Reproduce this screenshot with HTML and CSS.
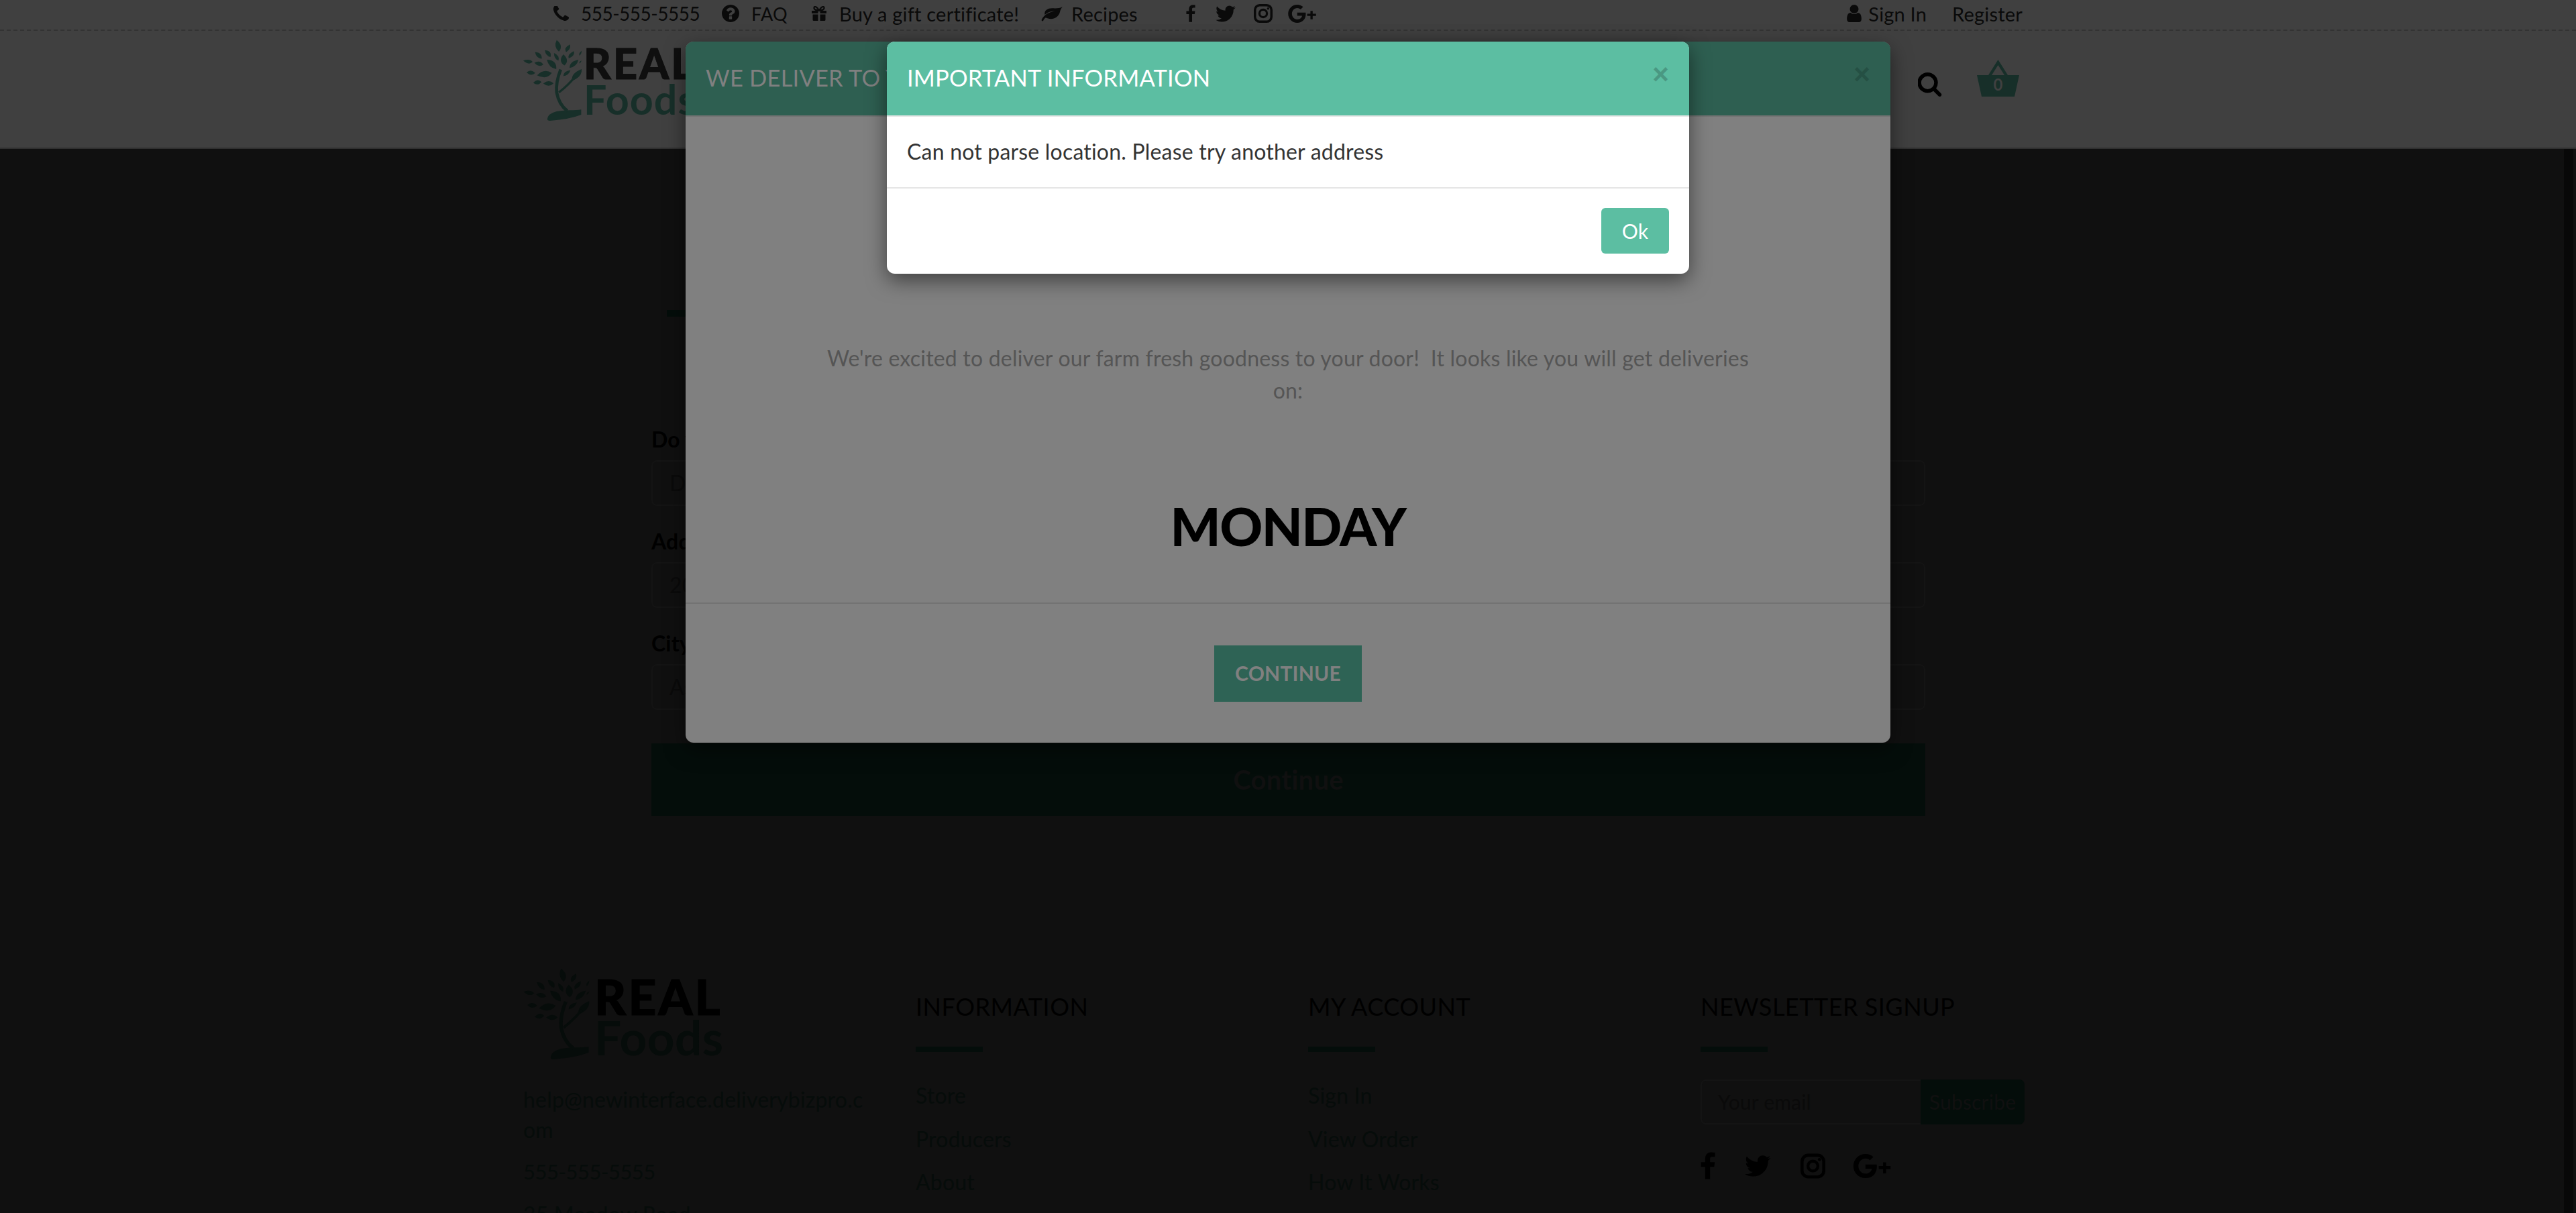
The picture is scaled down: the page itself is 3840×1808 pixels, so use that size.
FILE: index.html
```html
<!DOCTYPE html>
<html lang="en">

<head>
    <title>Real Foods</title>

    <link rel="stylesheet" href="styles.css">
</head>

<body>
    <svg class="sprite" width="0" height="0">
        <defs>
            <symbol id="i-phone" viewBox="200 200 1400 1400"><path d="M1600 1240q0 27-10 70.5t-21 68.5q-21 50-122 106-94 51-186 51-27 0-53-3.5t-57.5-12.5-47-14.5-55.5-20.5-49-18q-98-35-175-83-127-79-264-216t-216-264q-48-77-83-175-3-9-18-49t-20.5-55.5-14.5-47-12.5-57.5-3.5-53q0-92 51-186 56-101 106-122 25-11 68.5-21t70.5-10q14 0 21 3 18 6 53 76 11 19 30 54t35 63.5 31 53.5q3 4 17.5 25t21.5 35.5 7 28.5q0 20-28.5 50t-62 55-62 53-28.5 46q0 9 5 22.5t8.5 20.5 14 24 11.5 19q76 137 174 235t235 174q2 1 19 11.5t24 14 20.5 8.5 22.5 5q18 0 46-28.5t53-62 55-62 50-28.5q14 0 28.5 7t35.5 21.5 25 17.5q25 15 53.5 31t63.5 35 54 30q70 35 76 53 3 7 3 21z"/></symbol>
            <symbol id="i-question" viewBox="128 128 1536 1536"><path d="M1024 1376v-192q0-14-9-23t-23-9h-192q-14 0-23 9t-9 23v192q0 14 9 23t23 9h192q14 0 23-9t9-23zm256-672q0-88-55.5-163t-138.5-116-170-41q-243 0-371 213-15 24 8 42l132 100q7 6 19 6 16 0 25-12 53-68 86-92 34-24 86-24 48 0 85.5 26t37.5 59q0 38-20 61t-68 45q-63 28-115.5 86.5t-52.5 125.5v36q0 14 9 23t23 9h192q14 0 23-9t9-23q0-19 21.5-49.5t54.5-49.5q32-18 49-28.5t46-35 44.5-48 28-60.5 12.5-81zm384 192q0 209-103 385.5t-279.5 279.5-385.5 103-385.5-103-279.5-279.5-103-385.5 103-385.5 279.5-279.5 385.5-103 385.5 103 279.5 279.5 103 385.5z"/></symbol>
            <symbol id="i-gift" viewBox="0 0 24 24"><path d="M1 8h9.500v4H1zM13.500 8H23v4h-9.500zM2.500 13.500h8v9.500h-6.500q-1.500 0-1.500-1.500zM13.500 13.500h8v8q0 1.500-1.500 1.500h-6.500z"/><path d="M12 7.500C9 2 5 .5 4.500 3.500 4 6.500 8 7.500 12 7.500c4 0 8-1 7.500-4C19 .5 15 2 12 7.500z" fill="none" stroke="currentColor" stroke-width="2.200"/></symbol>
            <symbol id="i-leaf" viewBox="0 0 34 24"><path d="M33 1c-2 3-3 4-4 8-1.500 7-8 11-14 11-3 0-6-1-8-2-2 1-3 3-4 5-1 1-3 0-2.500-1.500C2 18 5 14 10 11.500c4-2 8-3 11-4-5 .5-11 2-15.500 6C4 7 10 3.500 17 3.500c6 0 12 .5 16-2.500z"/></symbol>
            <symbol id="i-facebook" viewBox="448 0 920 1664" preserveAspectRatio="xMinYMid meet"><path d="M1343 12v264h-157q-86 0-116 36t-30 108v189h293l-39 296h-254v759h-306v-759h-255v-296h255v-218q0-186 104-288.5t277-102.5q147 0 228 12z"/></symbol>
            <symbol id="i-twitter" viewBox="100 250 1600 1300"><path d="M1684 408q-67 98-162 167 1 14 1 42 0 130-38 259.5t-115.5 248.5-184.5 210.5-258 146-323 54.5q-271 0-496-145 35 4 76 4 225 0 401-138-105-2-188-64.5t-114-159.5q33 5 61 5 43 0 85-11-112-23-185.5-111.5t-73.5-205.5v-4q68 38 146 41-66-44-105-115t-39-154q0-88 44-163 121 149 294.500 238.500t371.500 99.500q-8-38-8-74 0-134 94.500-228.500t228.500-94.500q140 0 236 102 109-21 205-78-37 115-142 178 92-10 184-50z"/></symbol>
            <symbol id="i-instagram" viewBox="0 0 24 24"><rect x="1.500" y="1.500" width="21" height="21" rx="6" fill="none" stroke="currentColor" stroke-width="3"/><circle cx="12" cy="12" r="4.800" fill="none" stroke="currentColor" stroke-width="2.800"/><circle cx="18.300" cy="5.700" r="1.500"/></symbol>
            <symbol id="i-gplus" viewBox="0 0 40 26"><path d="M13 0c3.500 0 6.300 1.200 8.500 3.200l-3.600 3.500C17 5.800 15.400 4.800 13 4.800 8.800 4.800 5.400 8.400 5.400 13s3.400 8.200 7.600 8.200c4.800 0 6.700-3.400 7-5.300h-7v-4.600h12.100c.1.700.2 1.400.2 2.300C25.300 21 20.400 26 13 26 5.800 26 0 20.200 0 13S5.800 0 13 0z"/><path d="M32 9h3.200v4H40v3.200h-4.800V21H32v-4.800h-4.700V13H32z"/></symbol>
            <symbol id="i-user" viewBox="256 128 1280 1536"><path d="M1536 1399q0 109-62.5 187t-150.5 78h-854q-88 0-150.5-78t-62.5-187q0-85 8.5-160.5t31.5-152 58.5-131 94-89 134.5-34.5q131 128 313 128t313-128q76 0 134.5 34.5t94 89 58.5 131 31.5 152 8.5 160.5zm-256-887q0 159-112.5 271.5t-271.5 112.5-271.5-112.5-112.5-271.5 112.5-271.5 271.5-112.5 271.5 112.5 112.5 271.5z"/></symbol>
            <symbol id="i-search" viewBox="128 128 1600 1664"><path d="M1216 832q0-185-131.500-316.500t-316.500-131.500-316.500 131.500-131.500 316.500 131.500 316.500 316.500 131.500 316.500-131.500 131.500-316.500zm512 832q0 52-38 90t-90 38q-54 0-90-38l-343-342q-179 124-399 124-143 0-273.500-55.500t-225-150-150-225-55.500-273.500 55.500-273.500 150-225 225-150 273.500-55.500 273.500 55.500 225 150 150 225 55.500 273.500q0 220-124 399l343 343q37 37 37 90z"/></symbol>
            <symbol id="i-tree" viewBox="30 25 265 370">
                <path d="M180 30Q212 55 190 82Q165 60 180 30M240 50Q245 72 222 84Q210 65 240 50M83 84Q115 85 113 114Q88 110 83 84M127 75Q160 78 152 106Q130 100 127 75M168 88Q195 100 188 122Q168 115 168 88M258 80Q262 102 234 112Q228 92 258 80M210 94Q240 120 215 144Q185 125 210 94M292 78Q292 92 282 100Q278 88 292 78M136 118Q182 120 178 160Q145 155 136 118M278 118Q270 150 238 155Q238 125 278 118M292 122Q290 130 282 135Q280 126 292 122M30 122Q60 112 72 128Q55 145 30 122M80 132Q105 118 120 140Q100 155 80 132M45 175Q65 158 84 178Q65 195 45 175M92 188Q125 155 158 178Q135 210 92 188M75 222Q95 200 112 218Q95 238 75 222M120 225Q145 205 166 224Q145 245 120 225M242 165Q235 188 210 192Q210 170 242 165M292 160Q295 195 250 212Q242 180 292 160"/>
                <path d="M138 385Q140 360 180 350Q215 345 240 345Q270 345 290 342L290 365Q240 385 150 392Q138 392 138 385"/>
                <path d="M228 348Q190 320 180 265Q175 220 198 162" fill="none" stroke="currentColor" stroke-width="14"/>
                <path d="M190 265Q235 230 262 195" fill="none" stroke="currentColor" stroke-width="10"/>
            </symbol>
        </defs>
    </svg>

    <div class="top-bar">
        <div class="container top-bar__inner">
            <a class="top-link top-link--phone"><svg class="ico ico--phone"><use href="#i-phone"/></svg><span class="phone-number">555-555-5555</span></a>
            <a class="top-link top-link--faq"><svg class="ico ico--faq"><use href="#i-question"/></svg>FAQ</a>
            <a class="top-link top-link--gift"><svg class="ico ico--gift"><use href="#i-gift"/></svg>Buy a gift certificate!</a>
            <a class="top-link top-link--leaf"><svg class="ico ico--leaf"><use href="#i-leaf"/></svg>Recipes</a>
            <div class="top-social">
                <svg class="top-social__f"><use href="#i-facebook"/></svg>
                <svg class="top-social__t"><use href="#i-twitter"/></svg>
                <svg class="top-social__i"><use href="#i-instagram"/></svg>
                <svg class="top-social__g"><use href="#i-gplus"/></svg>
            </div>
            <div class="top-account">
                <a class="top-link top-link--user"><svg class="ico ico--user"><use href="#i-user"/></svg>Sign In</a>
                <a class="top-link">Register</a>
            </div>
        </div>
    </div>

    <header class="site-header">
        <div class="container site-header__inner">
            <div class="logo">
                <svg class="logo__tree"><use href="#i-tree"/></svg>
                <div class="logo__text">
                    <span class="logo__real">REAL</span>
                    <span class="logo__foods">Foods</span>
                </div>
            </div>
            <svg class="search-icon"><use href="#i-search"/></svg>
            <div class="basket">
                <svg class="basket__icon" viewBox="0 0 63 55"><path d="M31.500 0 46 23h17l-7 32H7L0 23h17zM22 23h19l-9.500-15z" fill-rule="evenodd"/></svg>
                <span class="basket__count">0</span>
            </div>
        </div>
    </header>

    <main class="page-main">
        <div class="step-bar"></div>
        <div class="field">
            <label class="field__label">Do you want delivery?</label>
            <div class="field__input">Delivery</div>
        </div>
        <div class="field">
            <label class="field__label">Address</label>
            <div class="field__input">20 Main Street</div>
        </div>
        <div class="field">
            <label class="field__label">City</label>
            <div class="field__input">Asheville</div>
        </div>
        <div class="main-button">Continue</div>
    </main>

    <footer class="site-footer">
        <div class="footer-col">
            <div class="logo logo--footer">
                <svg class="logo__tree"><use href="#i-tree"/></svg>
                <div class="logo__text">
                    <span class="logo__real">REAL</span>
                    <span class="logo__foods">Foods</span>
                </div>
            </div>
            <p class="footer-contact footer-contact--email">help@newinterface.deliverybizpro.com</p>
            <p class="footer-contact footer-contact--phone">555-555-5555</p>
            <p class="footer-contact">35 Meadow Road</p>
        </div>
        <div class="footer-col footer-col--links">
            <h4 class="footer-title">INFORMATION</h4>
            <a class="footer-link">Store</a>
            <a class="footer-link">Producers</a>
            <a class="footer-link">About</a>
        </div>
        <div class="footer-col footer-col--links">
            <h4 class="footer-title">MY ACCOUNT</h4>
            <a class="footer-link">Sign In</a>
            <a class="footer-link">View Order</a>
            <a class="footer-link">How It Works</a>
        </div>
        <div class="footer-col footer-col--links">
            <h4 class="footer-title">NEWSLETTER SIGNUP</h4>
            <div class="subscribe">
                <div class="subscribe__input">Your email</div>
                <div class="subscribe__button">Subscribe</div>
            </div>
            <div class="footer-social">
                <svg class="footer-social__f"><use href="#i-facebook"/></svg>
                <svg class="footer-social__t"><use href="#i-twitter"/></svg>
                <svg class="footer-social__i"><use href="#i-instagram"/></svg>
                <svg class="footer-social__g"><use href="#i-gplus"/></svg>
            </div>
        </div>
    </footer>

    <div class="scroll-track"></div>

    <!-- Окно под верхним окном -->
    <div class="modal modal--back">
        <div class="modal__header modal__header--back">
            <span class="modal__title">WE DELIVER TO YOU</span>
            <span class="modal__close">&times;</span>
        </div>
        <div class="deliver-body">
            <p class="deliver-text">We're excited to deliver our farm fresh goodness to your door!&nbsp; It looks like you will get deliveries<br>on:</p>
            <p class="deliver-day">MONDAY</p>
        </div>
        <div class="deliver-footer">
            <div class="deliver-button">CONTINUE</div>
        </div>
    </div>

    <div class="modal modal--front">
        <div class="modal__header">
            <span class="modal__title">IMPORTANT INFORMATION</span>
            <span class="modal__close">&times;</span>
        </div>
        <div class="alert-body">Can not parse location. Please try another address</div>
        <div class="alert-footer">
            <div class="alert-button">Ok</div>
        </div>
    </div>
</body>

</html>
```

FILE: styles.css
```css
* {
    padding: 0;
    margin: 0;
    box-sizing: border-box;
}

body {
    position: relative;
    height: 100vh;
    overflow: hidden;
    background: #101010;
    color: #000;
    font-family: Lato, "Open Sans", sans-serif;
    font-size: 32px;
    letter-spacing: 0.2px;
}

.sprite {
    position: absolute;
}

.container {
    width: 2240px;
    margin-left: 780px;
}

/* Верхняя полоса */
.top-bar {
    height: 46px;
    background: #404040;
    border-bottom: 2px dashed #333;
}

.top-bar__inner {
    display: flex;
    align-items: center;
    height: 40px;
    padding: 0 5px 0 45px;
}

.top-link {
    display: flex;
    align-items: center;
    font-size: 29px;
    color: #0a0a0a;
    white-space: nowrap;
}

.phone-number {
    font-size: 28px;
    letter-spacing: -0.5px;
}

.ico {
    fill: currentColor;
}

.ico--phone {
    width: 23px;
    height: 23px;
    margin-right: 18px;
}

.ico--faq {
    width: 26px;
    height: 26px;
    margin-right: 18px;
}

.ico--gift {
    width: 24px;
    height: 24px;
    margin-right: 18px;
}

.ico--leaf {
    width: 33px;
    height: 23px;
    margin-right: 12px;
}

.ico--user {
    width: 22px;
    height: 26px;
    margin-right: 10px;
}

.top-link--phone {
    width: 251px;
}

.top-link--faq {
    width: 133px;
    font-size: 27px;
}

.top-link--gift {
    width: 343px;
}

.top-link--leaf {
    width: 216px;
}

.top-social {
    display: flex;
    align-items: center;
    fill: #0a0a0a;
    color: #0a0a0a;
}

.top-social__f {
    width: 14px;
    height: 26px;
    margin-right: 30px;
}

.top-social__t {
    width: 30px;
    height: 25px;
    margin-right: 26px;
}

.top-social__i {
    width: 30px;
    height: 28px;
    margin-right: 22px;
}

.top-social__g {
    width: 42px;
    height: 27px;
}

.top-account {
    display: flex;
    gap: 38px;
    margin-left: auto;
}

/* Шапка */
.site-header {
    height: 176px;
    background: #404040;
    border-bottom: 2px solid #303030;
}

.site-header__inner {
    display: flex;
    align-items: flex-start;
    height: 100%;
}

.logo {
    display: flex;
    width: 400px;
    margin-top: 12px;
    fill: #172f29;
    color: #172f29;
}

.logo__tree {
    width: 88px;
    height: 123px;
    flex: none;
}

.logo__text {
    display: flex;
    flex-direction: column;
    margin-left: 2px;
}

.logo__real {
    margin-top: 8px;
    font-size: 63px;
    line-height: 56px;
    font-weight: 900;
    color: #0f0f0f;
    letter-spacing: 3px;
    -webkit-text-stroke: 1px #0f0f0f;
}

.logo__foods {
    font-size: 61px;
    line-height: 52px;
    font-weight: 700;
    color: #172f29;
    letter-spacing: 1px;
}

.search-icon {
    width: 36px;
    height: 36px;
    margin: 62px 0 0 auto;
    fill: #000;
}

.basket {
    position: relative;
    width: 63px;
    height: 55px;
    margin: 43px 10px 0 52px;
    fill: #172f29;
}

.basket__icon {
    display: block;
    width: 63px;
    height: 55px;
}

.basket__count {
    position: absolute;
    left: 0;
    right: 0;
    top: 20px;
    text-align: center;
    font-size: 24px;
    line-height: 34px;
    font-weight: 700;
    color: #404040;
}

/* Форма за окнами */
.page-main {
    width: 1899px;
    margin-left: 971px;
    padding-top: 240px;
}

.step-bar {
    width: 60px;
    height: 10px;
    margin-left: 23px;
    background: #040d0a;
}

.step-bar + .field {
    margin-top: 163px;
}

.field {
    margin-bottom: 33px;
}

.field__label {
    display: block;
    font-size: 32px;
    line-height: 40px;
    font-weight: 700;
    color: #000;
    margin-bottom: 11px;
}

.field__input {
    height: 68px;
    padding-left: 25px;
    border: 2px solid #141414;
    border-radius: 8px;
    line-height: 64px;
    color: #0a0a0a;
}

.main-button {
    height: 108px;
    margin-top: 50px;
    background: #040d0a;
    text-align: center;
    font-size: 40px;
    line-height: 108px;
    font-weight: 700;
    color: #101010;
}

/* Подвал */
.site-footer {
    display: grid;
    grid-template-columns: repeat(4, 515px);
    gap: 70px;
    margin: 226px 0 0 780px;
}

.logo--footer {
    width: 300px;
    margin: 0;
    fill: #060c0a;
    color: #060c0a;
}

.logo--footer .logo__tree {
    width: 100px;
    height: 138px;
}

.logo--footer .logo__text {
    margin-left: 6px;
}

.logo--footer .logo__real {
    margin-top: 10px;
    font-size: 73px;
    line-height: 66px;
    color: #000;
    -webkit-text-stroke: 1px #000;
}

.logo--footer .logo__foods {
    font-size: 71px;
    line-height: 56px;
    color: #060c0a;
    letter-spacing: 0.5px;
}

.footer-contact {
    line-height: 45px;
    color: #060c0a;
    word-break: break-all;
    margin-bottom: 18px;
}

.footer-contact--email {
    margin-top: 36px;
}

.footer-contact--phone {
    font-size: 31px;
    letter-spacing: -0.5px;
}

.footer-col--links {
    padding-top: 38px;
}

.footer-title {
    position: relative;
    font-size: 36px;
    line-height: 40px;
    font-weight: 400;
    color: #000;
    letter-spacing: 0.5px;
    margin-bottom: 93px;
}

.footer-title::after {
    content: '';
    position: absolute;
    left: 0;
    bottom: -48px;
    width: 100px;
    height: 8px;
    background: #040d0a;
}

.footer-link {
    display: block;
    line-height: 40px;
    color: #060c0a;
    margin-bottom: 24.5px;
}

.subscribe {
    display: flex;
    width: 483px;
    height: 67px;
    margin-top: -4px;
    font-size: 30px;
    line-height: 67px;
}

.subscribe__input {
    flex: 1;
    padding-left: 24px;
    border: 2px solid #141414;
    border-right: 0;
    border-radius: 8px 0 0 8px;
    color: #0a0a0a;
    line-height: 63px;
}

.subscribe__button {
    width: 155px;
    background: #040d0a;
    border-radius: 0 8px 8px 0;
    text-align: center;
    color: #101010;
}

.footer-social {
    display: flex;
    align-items: center;
    margin-top: 41px;
    fill: #000;
    color: #000;
}

.footer-social__f {
    width: 22px;
    height: 41px;
    margin-right: 44px;
}

.footer-social__t {
    width: 39px;
    height: 32px;
    margin-right: 44px;
}

.footer-social__i {
    width: 37px;
    height: 38px;
    margin-right: 41px;
}

.footer-social__g {
    width: 57px;
    height: 36px;
}

.scroll-track {
    position: absolute;
    top: 222px;
    bottom: 0;
    left: 3822px;
    width: 14px;
    background: #080808;
}

/* Окна */
.modal {
    position: absolute;
    top: 62px;
    overflow: hidden;
    border-radius: 12px;
}

.modal--back {
    left: 1022px;
    width: 1796px;
    height: 1045px;
    background: #808080;
    box-shadow: 0 10px 30px rgba(0, 0, 0, 0.5);
}

.modal--front {
    left: 1322px;
    width: 1196px;
    height: 346px;
    background: #fff;
    box-shadow: 0 10px 30px rgba(0, 0, 0, 0.5);
}

.modal__header {
    display: flex;
    justify-content: space-between;
    height: 112px;
    padding: 0 30px;
    background: #5cbea2;
    border-bottom: 2px solid #e5e5e5;
    color: #fff;
}

.modal__header--back {
    background: #2e5f51;
    border-bottom-color: #737373;
    color: #808080;
}

.modal__title {
    font-size: 34.5px;
    line-height: 108px;
}

.modal__close {
    font-family: "Liberation Sans", sans-serif;
    font-size: 42px;
    line-height: 98px;
    font-weight: 700;
    color: #4a9882;
}

.modal__header--back .modal__close {
    color: #255044;
}

.deliver-body {
    height: 726px;
    padding-top: 336px;
    border-bottom: 2px solid #737373;
    text-align: center;
}

.deliver-text {
    line-height: 48px;
    color: #555;
}

.deliver-day {
    margin-top: 132px;
    font-size: 79px;
    line-height: 92px;
    font-weight: 900;
    letter-spacing: -1.5px;
    color: #000;
}

.deliver-footer {
    display: flex;
    justify-content: center;
    padding-top: 62px;
}

.deliver-button {
    width: 220px;
    height: 84px;
    background: #2e6355;
    text-align: center;
    font-size: 30px;
    line-height: 82px;
    font-weight: 700;
    color: #808080;
}

.alert-body {
    height: 105px;
    padding: 30px;
    line-height: 43px;
    color: #333;
}

.alert-footer {
    display: flex;
    justify-content: flex-end;
    padding: 29px 30px 0;
    border-top: 2px solid #e5e5e5;
}

.alert-button {
    width: 101px;
    height: 68px;
    background: #5cbea2;
    border-radius: 6px;
    text-align: center;
    font-size: 30px;
    line-height: 68px;
    color: #fff;
}
```
